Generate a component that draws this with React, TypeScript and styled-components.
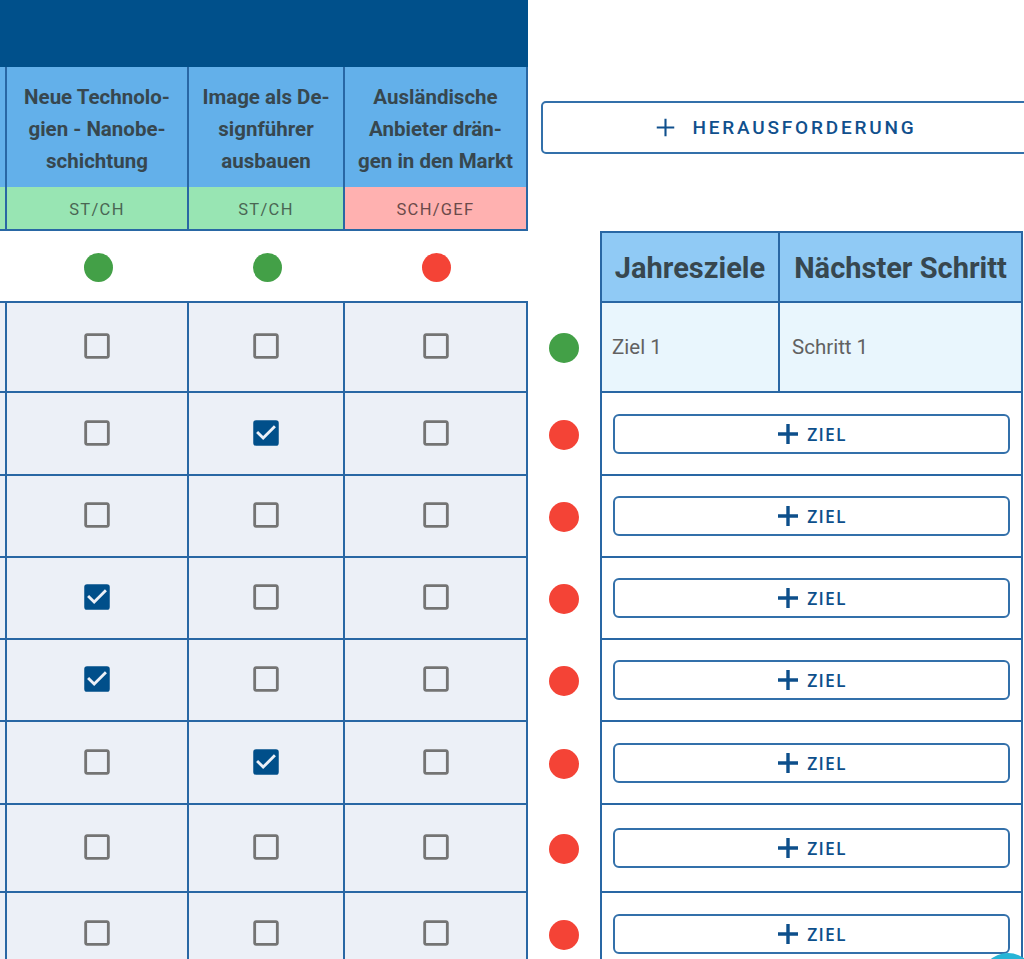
import React from "react";
import styled, { createGlobalStyle } from "styled-components";
import { MdCheckBox, MdCheckBoxOutlineBlank } from "react-icons/md";

const LINE = "#2967a4";
const COLS = "7px 182px 156px 183px";

const GlobalStyle = createGlobalStyle`
  * {
    box-sizing: border-box;
  }
  html, body {
    margin: 0;
    padding: 0;
    background: #ffffff;
    overflow: hidden;
  }
  body {
    font-family: Roboto, "Noto Sans", Arial, sans-serif;
  }
`;

const challenges = [
  { lines: [], tag: "", tone: "green", status: "" },
  { lines: ["Neue Technolo-", "gien - Nanobe-", "schichtung"], tag: "ST/CH", tone: "green", status: "green" },
  { lines: ["Image als De-", "signführer", "ausbauen"], tag: "ST/CH", tone: "green", status: "green" },
  { lines: ["Ausländische", "Anbieter drän-", "gen in den Markt"], tag: "SCH/GEF", tone: "red", status: "red" },
];

const rows = [
  { height: 90, checks: [false, false, false], status: "green", goal: "Ziel 1", step: "Schritt 1" },
  { height: 83, checks: [false, true, false], status: "red" },
  { height: 82, checks: [false, false, false], status: "red" },
  { height: 82, checks: [true, false, false], status: "red" },
  { height: 82, checks: [true, false, false], status: "red" },
  { height: 83, checks: [false, true, false], status: "red" },
  { height: 88, checks: [false, false, false], status: "red" },
  { height: 84, checks: [false, false, false], status: "red" },
];

const PlusIcon = ({ size, stroke }: { size: number; stroke: number }) => (
  <svg width={size} height={size} viewBox="0 0 24 24" fill="none">
    <path d="M12 2v20M2 12h20" stroke="currentColor" strokeWidth={stroke} />
  </svg>
);

const App = () => {
  return (
    <Page>
      <GlobalStyle />
      <Top>
        <LeftHead>
          <Band />
          <TitleRow>
            {challenges.map((c, i) => (
              <TitleCell key={i}>
                {c.lines.map((l) => (
                  <span key={l}>{l}</span>
                ))}
              </TitleCell>
            ))}
          </TitleRow>
          <TagRow>
            {challenges.map((c, i) => (
              <Tag key={i} $tone={c.tone}>
                {c.tag}
              </Tag>
            ))}
          </TagRow>
        </LeftHead>
        <RightHead>
          <AddChallenge type="button">
            <PlusIcon size={21} stroke={2.4} />
            HERAUSFORDERUNG
          </AddChallenge>
        </RightHead>
      </Top>

      <Row $height={72}>
        <StatusCells>
          {challenges.map((c, i) => (
            <CenterCell key={i}>{c.status && <Dot $color={c.status} $size={29} />}</CenterCell>
          ))}
        </StatusCells>
        <DotCell />
        <GoalHeader>
          <GoalHeadCell>Jahresziele</GoalHeadCell>
          <GoalHeadCell>Nächster Schritt</GoalHeadCell>
        </GoalHeader>
      </Row>

      {rows.map((r, i) => (
        <Row key={i} $height={r.height}>
          <CheckCells>
            <CheckCell />
            {r.checks.map((on, j) => (
              <CheckCell key={j}>
                {on ? <MdCheckBox size={34} color="#004f8a" /> : <MdCheckBoxOutlineBlank size={34} color="#747474" />}
              </CheckCell>
            ))}
          </CheckCells>
          <DotCell>
            <Dot $color={r.status} $size={30} />
          </DotCell>
          {r.goal ? (
            <GoalRow $filled>
              <GoalText>{r.goal}</GoalText>
              <GoalText>{r.step}</GoalText>
            </GoalRow>
          ) : (
            <GoalRow>
              <AddGoal type="button">
                <PlusIcon size={24} stroke={3.4} />
                ZIEL
              </AddGoal>
            </GoalRow>
          )}
        </Row>
      ))}

      <Fab />
    </Page>
  );
};

export default App;

const Page = styled.div`
  width: 1024px;
  display: flex;
  flex-direction: column;
`;

const Top = styled.div`
  display: flex;
  align-items: flex-start;
`;

const LeftHead = styled.div`
  width: 528px;
  flex-shrink: 0;
  display: flex;
  flex-direction: column;
`;

const Band = styled.div`
  height: 67px;
  background: #00508b;
`;

const TitleRow = styled.div`
  display: grid;
  grid-template-columns: ${COLS};
  height: 120px;
`;

const TitleCell = styled.div`
  background: #63b0ea;
  border-right: 2px solid ${LINE};
  display: flex;
  flex-direction: column;
  align-items: center;
  justify-content: center;
  padding-top: 4px;
  color: #37474f;
  font-size: 20.5px;
  font-weight: 700;
  line-height: 32px;
  text-align: center;
  white-space: nowrap;
`;

const TagRow = styled.div`
  display: grid;
  grid-template-columns: ${COLS};
  height: 44px;
`;

const Tag = styled.div<{ $tone: string }>`
  background: ${(p) => (p.$tone === "red" ? "#ffb1b0" : "#98e5b3")};
  border-right: 2px solid ${LINE};
  border-bottom: 2px solid ${LINE};
  display: flex;
  align-items: center;
  justify-content: center;
  padding-top: 3px;
  color: ${(p) => (p.$tone === "red" ? "#6b4a4a" : "#4a6653")};
  font-size: 16.5px;
  letter-spacing: 1.3px;
`;

const RightHead = styled.div`
  padding: 101px 0 0 13px;
`;

const AddChallenge = styled.button`
  width: 490px;
  height: 53px;
  flex-shrink: 0;
  display: flex;
  align-items: center;
  justify-content: center;
  gap: 16px;
  background: #ffffff;
  border: 2px solid #3370aa;
  border-radius: 5px;
  color: #10508d;
  font-family: Roboto, Arial, sans-serif;
  font-size: 19px;
  font-weight: 500;
  letter-spacing: 2.8px;
  cursor: pointer;
`;

const Row = styled.div<{ $height: number }>`
  display: flex;
  height: ${(p) => p.$height}px;
`;

const StatusCells = styled.div`
  width: 528px;
  flex-shrink: 0;
  display: grid;
  grid-template-columns: ${COLS};
  border-bottom: 2px solid ${LINE};
`;

const CenterCell = styled.div`
  display: flex;
  align-items: center;
  justify-content: center;
  padding-top: 2px;
`;

const CheckCells = styled.div`
  width: 528px;
  flex-shrink: 0;
  display: grid;
  grid-template-columns: ${COLS};
`;

const CheckCell = styled.div`
  background: #ecf0f7;
  border-right: 2px solid ${LINE};
  border-bottom: 2px solid ${LINE};
  display: flex;
  align-items: center;
  justify-content: center;
  padding-bottom: 2px;
`;

const DotCell = styled.div`
  width: 72px;
  flex-shrink: 0;
  display: flex;
  align-items: center;
  justify-content: center;
`;

const Dot = styled.span<{ $color: string; $size: number }>`
  width: ${(p) => p.$size}px;
  height: ${(p) => p.$size}px;
  border-radius: 50%;
  background: ${(p) => (p.$color === "green" ? "#43a047" : "#f44336")};
`;

const GoalHeader = styled.div`
  width: 423px;
  flex-shrink: 0;
  display: grid;
  grid-template-columns: 178px 1fr;
  border: 2px solid ${LINE};
  background: #90caf5;
`;

const GoalHeadCell = styled.div`
  display: flex;
  align-items: center;
  justify-content: center;
  padding-top: 2px;
  color: #37474f;
  font-size: 29px;
  font-weight: 700;
  white-space: nowrap;

  &:first-child {
    border-right: 2px solid ${LINE};
  }
`;

const GoalRow = styled.div<{ $filled?: boolean }>`
  width: 423px;
  flex-shrink: 0;
  display: grid;
  grid-template-columns: ${(p) => (p.$filled ? "178px 1fr" : "1fr")};
  align-items: ${(p) => (p.$filled ? "stretch" : "center")};
  padding: ${(p) => (p.$filled ? "0" : "0 11px")};
  background: ${(p) => (p.$filled ? "#e9f6fd" : "#ffffff")};
  border-left: 2px solid ${LINE};
  border-right: 2px solid ${LINE};
  border-bottom: 2px solid ${LINE};
`;

const GoalText = styled.div`
  display: flex;
  align-items: center;
  padding: 0 10px;
  color: #616161;
  font-size: 20.5px;

  &:first-child {
    border-right: 2px solid ${LINE};
  }

  &:last-child {
    padding-left: 12px;
  }
`;

const AddGoal = styled.button`
  width: 100%;
  height: 40px;
  display: flex;
  align-items: center;
  justify-content: center;
  gap: 7px;
  background: #ffffff;
  border: 2px solid #3370aa;
  border-radius: 6px;
  color: #0d4f8b;
  font-family: "Open Sans", Roboto, sans-serif;
  font-size: 17.5px;
  font-weight: 600;
  letter-spacing: 1.2px;
  cursor: pointer;
`;

const Fab = styled.div`
  position: fixed;
  left: 980px;
  top: 953px;
  width: 56px;
  height: 56px;
  border-radius: 50%;
  background: #27b4d6;
`;
